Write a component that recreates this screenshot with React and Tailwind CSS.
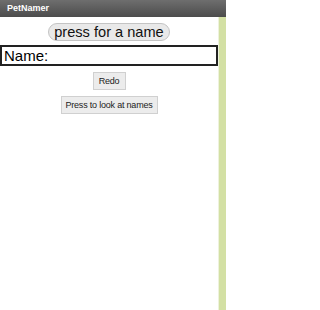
import React from 'react';

const App = () => {
  return (
    <div className="w-[226px] h-[310px] flex flex-col bg-white font-['Liberation_Sans',Arial,sans-serif] overflow-hidden">
      {/* Title bar */}
      <header className="h-[17px] shrink-0 bg-gradient-to-b from-[#6e6e6e] to-[#4c4c4c] flex items-center pl-[7px]">
        <span className="text-[9px] font-bold text-white leading-none">PetNamer</span>
      </header>

      <div className="flex flex-1">
        {/* Screen content */}
        <main className="w-[218px] flex flex-col items-center">
          <button className="mt-[6px] h-[18px] w-[122px] rounded-full border border-[#c4c4c4] bg-[#e9e9e9] text-[14.6px] leading-none text-[#111]">
            press for a name
          </button>

          <div className="mt-[4px] w-[218px] h-[21px] border-2 border-[#222] flex items-center pl-[2px]">
            <span className="text-[15px] leading-none text-black">Name:</span>
          </div>

          <button className="mt-[6px] h-[18px] w-[33px] border border-[#d0d0d0] bg-[#ececec] text-[9px] tracking-[-0.2px] leading-none text-[#222]">
            Redo
          </button>

          <button className="mt-[6px] h-[18px] w-[97px] border border-[#d0d0d0] bg-[#ececec] text-[9px] tracking-[-0.2px] leading-none text-[#222]">
            Press to look at names
          </button>
        </main>

        {/* Side strip */}
        <div className="w-px bg-[#eef2dc]" />
        <div className="flex-1 bg-[#d3e0a4]" />
      </div>
    </div>
  );
};

export default App;
